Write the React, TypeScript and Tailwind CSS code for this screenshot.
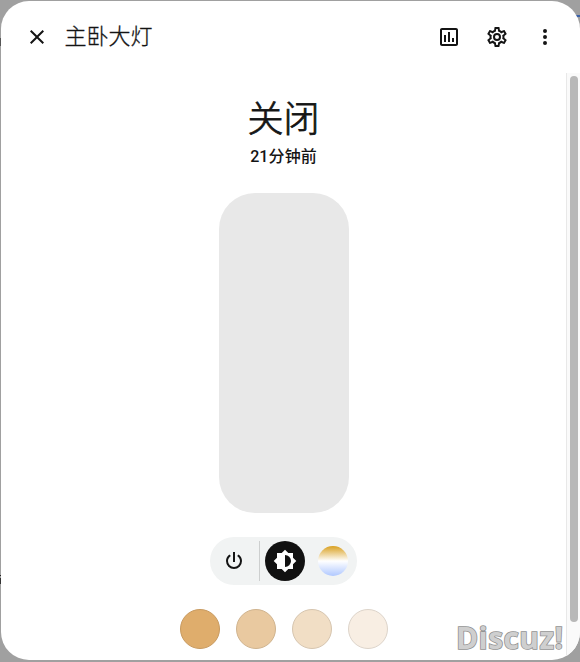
import type { ReactNode } from "react";

const paths = {
  close:
    "M19,6.41L17.59,5L12,10.59L6.41,5L5,6.41L10.59,12L5,17.59L6.41,19L12,13.41L17.59,19L19,17.59L13.41,12L19,6.41Z",
  chart:
    "M9 17H7V10H9V17M13 17H11V7H13V17M17 17H15V13H17V17M19 19H5V5H19V19.1M19 3H5C3.9 3 3 3.9 3 5V19C3 20.1 3.9 21 5 21H19C20.1 21 21 20.1 21 19V5C21 3.9 20.1 3 19 3Z",
  cog: "M12,8A4,4 0 0,1 16,12A4,4 0 0,1 12,16A4,4 0 0,1 8,12A4,4 0 0,1 12,8M12,10A2,2 0 0,0 10,12A2,2 0 0,0 12,14A2,2 0 0,0 14,12A2,2 0 0,0 12,10M10,22C9.75,22 9.54,21.82 9.5,21.58L9.13,18.93C8.5,18.68 7.96,18.34 7.44,17.94L4.95,18.95C4.73,19.03 4.46,18.95 4.34,18.73L2.34,15.27C2.21,15.05 2.27,14.78 2.46,14.63L4.57,12.97L4.5,12L4.57,11L2.46,9.37C2.27,9.22 2.21,8.95 2.34,8.73L4.34,5.27C4.46,5.05 4.73,4.96 4.95,5.05L7.44,6.05C7.96,5.66 8.5,5.32 9.13,5.07L9.5,2.42C9.54,2.18 9.75,2 10,2H14C14.25,2 14.46,2.18 14.5,2.42L14.87,5.07C15.5,5.32 16.04,5.66 16.56,6.05L19.05,5.05C19.27,4.96 19.54,5.05 19.66,5.27L21.66,8.73C21.79,8.95 21.73,9.22 21.54,9.37L19.43,11L19.5,12L19.43,13L21.54,14.63C21.73,14.78 21.79,15.05 21.66,15.27L19.66,18.73C19.54,18.95 19.27,19.04 19.05,18.95L16.56,17.95C16.04,18.34 15.5,18.68 14.87,18.93L14.5,21.58C14.46,21.82 14.25,22 14,22H10M11.25,4L10.88,6.61C9.68,6.86 8.62,7.5 7.85,8.39L5.44,7.35L4.69,8.65L6.8,10.2C6.4,11.37 6.4,12.64 6.8,13.8L4.68,15.36L5.43,16.66L7.86,15.62C8.63,16.5 9.68,17.14 10.87,17.38L11.24,20H12.76L13.13,17.39C14.32,17.14 15.37,16.5 16.14,15.62L18.57,16.66L19.32,15.36L17.2,13.81C17.6,12.64 17.6,11.37 17.2,10.2L19.31,8.65L18.56,7.35L16.15,8.39C15.38,7.5 14.32,6.86 13.12,6.62L12.75,4H11.25Z",
  dots: "M12,16A2,2 0 0,1 14,18A2,2 0 0,1 12,20A2,2 0 0,1 10,18A2,2 0 0,1 12,16M12,10A2,2 0 0,1 14,12A2,2 0 0,1 12,14A2,2 0 0,1 10,12A2,2 0 0,1 12,10M12,4A2,2 0 0,1 14,6A2,2 0 0,1 12,8A2,2 0 0,1 10,6A2,2 0 0,1 12,4Z",
  power:
    "M16.56,5.44L15.11,6.89C16.84,7.94 18,9.83 18,12A6,6 0 0,1 12,18A6,6 0 0,1 6,12C6,9.83 7.16,7.94 8.88,6.88L7.44,5.44C5.36,6.88 4,9.28 4,12A8,8 0 0,0 12,20A8,8 0 0,0 20,12C20,9.28 18.64,6.88 16.56,5.44M13,3H11V13H13",
  brightness:
    "M12,18V6A6,6 0 0,1 18,12A6,6 0 0,1 12,18M20,15.31L23.31,12L20,8.69V4H15.31L12,0.69L8.69,4H4V8.69L0.69,12L4,15.31V20H8.69L12,23.31L15.31,20H20V15.31Z",
};

function Icon({ name }: { name: keyof typeof paths }) {
  return (
    <svg viewBox="0 0 24 24" className="size-6 fill-current">
      <path d={paths[name]} />
    </svg>
  );
}

function IconButton({ label, children }: { label: string; children: ReactNode }) {
  return (
    <button aria-label={label} className="flex size-12 items-center justify-center">
      {children}
    </button>
  );
}

const swatches = [
  "bg-[#dfad6c] border-[#c79a60]",
  "bg-[#e9c9a0] border-[#cfb38e]",
  "bg-[#f1dec5] border-[#d6c5af]",
  "bg-[#f8eee3] border-[#ddd4ca]",
];

export default function App() {
  return (
    <div className="relative h-[662px] w-[580px] overflow-hidden bg-[#a0a0a0] pt-px pb-[2px] pl-px font-['Roboto','Noto_Sans_CJK_SC',sans-serif] text-[#141414]">
      {/* fragments of the page that show behind the dialog */}
      <div className="absolute top-[38px] left-0 h-2 w-px bg-[#555]" />
      <div className="absolute top-[575px] left-0 h-px w-px bg-[#222]" />
      <div className="absolute top-[578px] left-0 h-[6px] w-px bg-[#333]" />
      <div className="absolute top-[15px] right-0 h-[2px] w-1 bg-[#3c62a8]" />

      <main className="relative flex h-[659px] flex-col overflow-hidden rounded-[28px] bg-white">
        <header className="flex h-[72px] shrink-0 items-center pr-[11px] pl-3">
          <IconButton label="关闭">
            <Icon name="close" />
          </IconButton>
          <h1 className="ml-[3.5px] flex-1 text-[22px] leading-7 font-light [-webkit-text-stroke:0.3px_#141414]">主卧大灯</h1>
          <IconButton label="历史">
            <Icon name="chart" />
          </IconButton>
          <IconButton label="设置">
            <Icon name="cog" />
          </IconButton>
          <IconButton label="更多">
            <Icon name="dots" />
          </IconButton>
        </header>

        <div className="flex min-h-0 flex-1">
          <section className="flex flex-1 flex-col items-center pt-[25px]">
            <p className="text-4xl leading-[44px] font-light [-webkit-text-stroke:0.8px_#141414]">关闭</p>
            <p className="mt-[3px] text-base leading-6 font-medium tracking-[0.1px]">21分钟前</p>
            <div className="mt-6 h-[320px] w-[130px] shrink-0 rounded-[36px] bg-[#e8e8e8]" />
            <div className="mt-6 flex h-12 w-[147px] shrink-0 items-center rounded-full bg-[#f1f3f3]">
              <button aria-label="电源" className="flex w-12 justify-center">
                <Icon name="power" />
              </button>
              <span className="ml-px h-10 w-px bg-[#cdcfcf]" />
              <button aria-label="亮度" className="ml-[5px] flex size-10 items-center justify-center rounded-full bg-[#111] text-white">
                <Icon name="brightness" />
              </button>
              <button
                aria-label="色温"
                className="ml-[13px] size-[30px] rounded-full bg-linear-to-b/srgb from-[#d9a020] via-white to-[#b0c8ff]"
              />
            </div>
            <div className="mt-6 flex gap-4">
              {swatches.map((s) => (
                <button key={s} aria-label="颜色" className={`size-10 rounded-full border ${s}`} />
              ))}
            </div>
          </section>
          <div className="w-[14px] border-l border-[#e8e8e8] bg-[#fafafa] pt-[3px] pl-[3px]">
            <div className="h-[546px] w-2 rounded-full bg-[#b8b8b8]" />
          </div>
        </div>
      </main>

      <div className="absolute top-[620px] left-[456px] font-['Open_Sans','Noto_Sans',sans-serif] text-[30px] leading-9 font-bold tracking-[0.4px] text-[#cfcfcf] [paint-order:stroke_fill] [-webkit-text-stroke:1.6px_#929292]">
        Discuz!
      </div>
    </div>
  );
}
